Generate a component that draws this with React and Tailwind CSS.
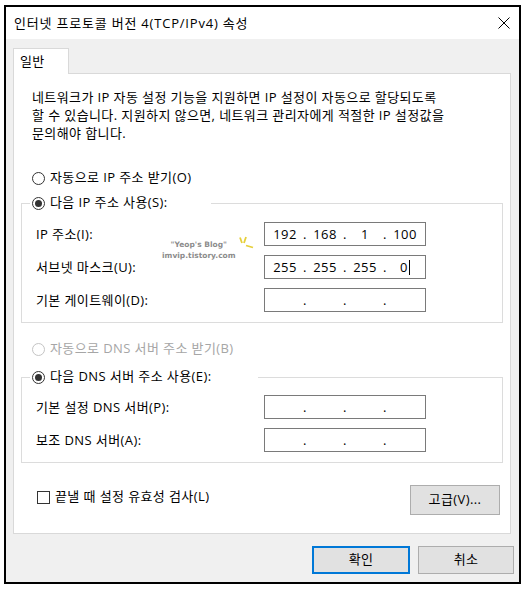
const font = "font-['Open_Sans','Noto_Sans_CJK_KR',sans-serif] tracking-[0.4px]";

function Radio({ checked, disabled }) {
  return (
    <span
      className={`w-[13px] h-[13px] rounded-full border flex items-center justify-center bg-white shrink-0 ${
        disabled ? 'border-[#c4c4c4]' : 'border-[#333]'
      }`}
    >
      {checked && <span className="w-[7px] h-[7px] rounded-full bg-[#333]" />}
    </span>
  );
}

function IpField({ parts = ['', '', '', ''], cursor }) {
  return (
    <div className="w-[162px] h-[24px] border border-[#7a7a7a] bg-white flex items-center text-[13px] leading-none">
      {parts.map((p, i) => (
        <div key={i} className="flex items-center">
          <span className="w-[40px] flex justify-center items-center">
            {p}
            {cursor && i === 3 && <span className="w-px h-[15px] bg-black ml-px" />}
          </span>
          {i < 3 && <span className="w-0 flex justify-center">.</span>}
        </div>
      ))}
    </div>
  );
}

function Row({ label, children, first }) {
  return (
    <div className={`flex items-center h-[24px] pl-[14px] ${first ? '' : 'mt-[9px]'}`}>
      <span className="w-[228px] text-[13px] leading-[18px]">{label}</span>
      {children}
    </div>
  );
}

function Button({ children, primary, className = '' }) {
  return (
    <div
      className={`bg-[#e1e1e1] flex items-center justify-center text-[13px] ${
        primary ? 'border-2 border-[#0078d7]' : 'border border-[#adadad]'
      } ${className}`}
    >
      {children}
    </div>
  );
}

export default function App() {
  return (
    <div className={`w-[527px] h-[589px] bg-white pt-[5px] pl-[4px] text-black ${font}`}>
      <div className="w-[517px] h-[579px] border-2 border-black flex flex-col">
        {/* Title bar */}
        <div className="h-[32px] bg-white flex items-center justify-between pl-[8px] pr-[9px] shrink-0">
          <span className="text-[13px] leading-[18px] tracking-[0.8px]">인터넷 프로토콜 버전 4(TCP/IPv4) 속성</span>
          <svg width="12" height="12" viewBox="0 0 12 12" className="text-black">
            <path d="M0.5 0.5L11.5 11.5M11.5 0.5L0.5 11.5" stroke="currentColor" strokeWidth="1" />
          </svg>
        </div>

        {/* Body */}
        <div className="flex-1 bg-[#f0f0f0] pt-[9px] pl-[7px]">
          <div className="w-[56px] h-[26px] border border-b-0 border-[#d9d9d9] bg-white relative z-10 -mb-px flex items-center pl-[6px] text-[13px]">
            일반
          </div>

          <div className="w-[498px] h-[461px] border border-[#d9d9d9] bg-white relative">
            <p className="pt-[14px] pl-[18px] text-[13px] leading-[18px] whitespace-nowrap">
              네트워크가 IP 자동 설정 기능을 지원하면 IP 설정이 자동으로 할당되도록
              <br />할 수 있습니다. 지원하지 않으면, 네트워크 관리자에게 적절한 IP 설정값을
              <br />문의해야 합니다.
            </p>

            <div className="mt-[27px] pl-[18px] h-[18px] flex items-center gap-[5px] text-[13px]">
              <Radio />
              <span>자동으로 IP 주소 받기(O)</span>
            </div>

            <fieldset className="mt-[7px] ml-[7px] w-[482px] border border-[#dcdcdc] px-0 pb-[10px] relative">
              <legend className="ml-[8px] px-[2px] w-[181px] h-[18px] flex items-center gap-[5px] text-[13px]">
                <Radio checked />
                <span>다음 IP 주소 사용(S):</span>
              </legend>
              <div className="pt-[10px]">
                <Row label="IP 주소(I):" first>
                  <IpField parts={['192', '168', '1', '100']} />
                </Row>
                <Row label="서브넷 마스크(U):">
                  <IpField parts={['255', '255', '255', '0']} cursor />
                </Row>
                <Row label="기본 게이트웨이(D):">
                  <IpField />
                </Row>
              </div>

              {/* blog watermark */}
              <div className="absolute left-[140px] top-[24px] flex items-start font-['DejaVu_Sans',sans-serif] font-bold text-[7.5px] tracking-normal leading-[11px] text-[#8c8c8c]">
                <div className="flex flex-col items-center pt-[3px]">
                  <span>"Yeop's Blog"</span>
                  <span>imvip.tistory.com</span>
                </div>
                <svg width="18" height="14" viewBox="0 0 18 14" className="ml-[1px]">
                  <path d="M3 1.5L5 7" stroke="#e6cf3a" strokeWidth="1.8" />
                  <path d="M9 1L7 7" stroke="#e6cf3a" strokeWidth="1.8" />
                  <path d="M9 9.5L16 11.5" stroke="#e6cf3a" strokeWidth="1.8" />
                </svg>
              </div>
            </fieldset>

            <div className="mt-[17px] pl-[18px] h-[18px] flex items-center gap-[5px] text-[13px] text-[#a6a6a6]">
              <Radio disabled />
              <span>자동으로 DNS 서버 주소 받기(B)</span>
            </div>

            <fieldset className="mt-[10px] ml-[7px] w-[482px] border border-[#dcdcdc] px-0 pb-[10px]">
              <legend className="ml-[8px] px-[2px] w-[228px] h-[18px] flex items-center gap-[5px] text-[13px]">
                <Radio checked />
                <span>다음 DNS 서버 주소 사용(E):</span>
              </legend>
              <div className="pt-[9px]">
                <Row label="기본 설정 DNS 서버(P):" first>
                  <IpField />
                </Row>
                <Row label="보조 DNS 서버(A):">
                  <IpField />
                </Row>
              </div>
            </fieldset>

            <div className="mt-[22px] flex items-start justify-between pl-[23px] pr-[10px]">
              <div className="flex items-center gap-[5px] text-[13px] h-[24px]">
                <span className="w-[13px] h-[13px] border border-[#333] bg-white" />
                <span>끝낼 때 설정 유효성 검사(L)</span>
              </div>
              <Button className="w-[90px] h-[30px]">고급(V)...</Button>
            </div>
          </div>

          <div className="flex justify-end gap-[8px] mt-[12px] pr-[5px]">
            <Button primary className="w-[98px] h-[28px]">확인</Button>
            <Button className="w-[96px] h-[28px]">취소</Button>
          </div>
        </div>
      </div>
    </div>
  );
}
